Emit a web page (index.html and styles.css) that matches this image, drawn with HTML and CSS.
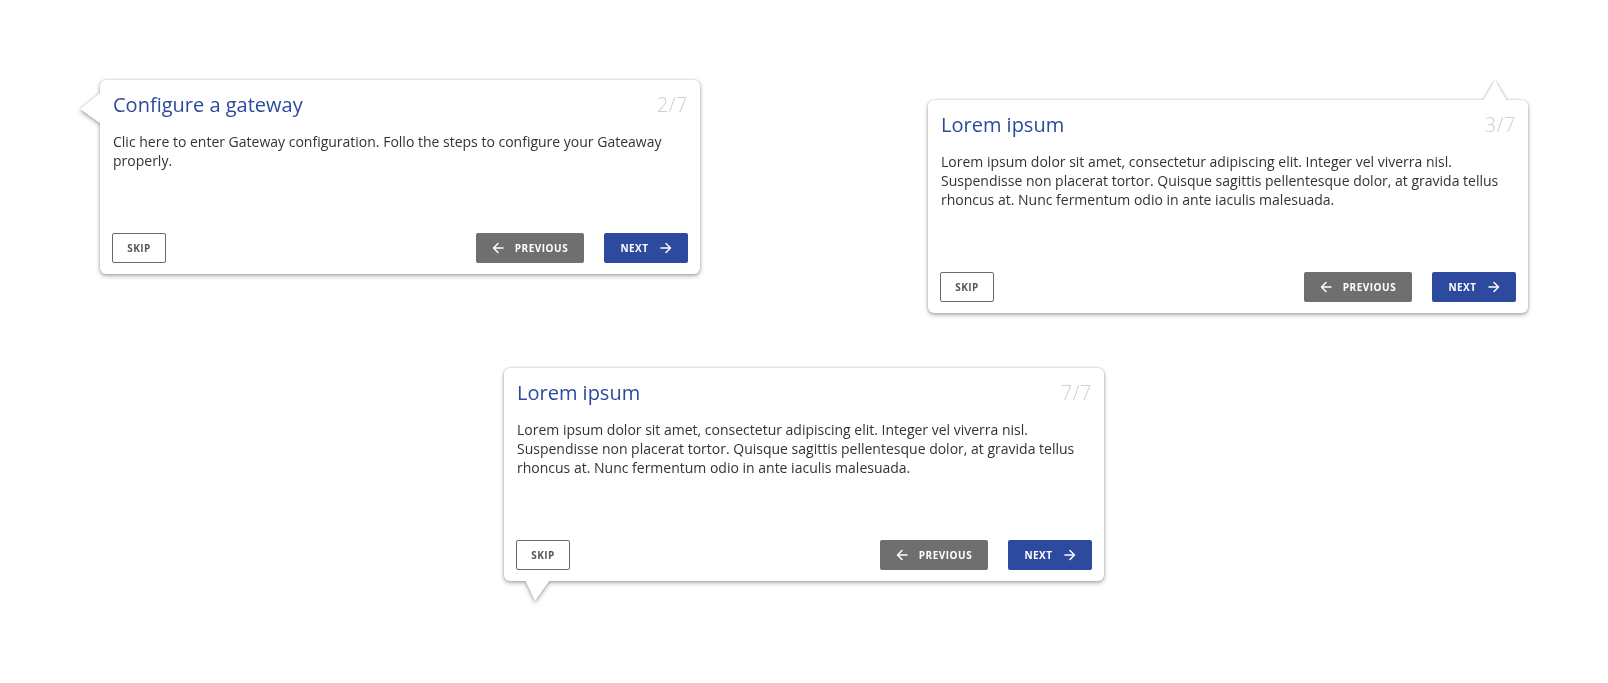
FILE: index.html
```html
<!DOCTYPE html>
<html lang="en">
<head>
<meta charset="utf-8">
<title>Tour tooltips</title>
<link rel="stylesheet" href="styles.css">
</head>
<body>
<main class="canvas">
  <div class="row row-top">
    <div class="tip tip-left">
      <span class="pointer pointer-left"></span>
      <section class="card">
        <header class="card-head">
          <h2 class="card-title">Configure a gateway</h2>
          <span class="card-count">2/7</span>
        </header>
        <p class="card-text">Clic here to enter Gateway configuration. Follo the steps to configure your Gateaway properly.</p>
        <footer class="card-foot">
          <button class="btn btn-skip">SKIP</button>
          <div class="nav">
            <button class="btn btn-prev"><svg class="ico" viewBox="0 0 12 12"><path d="M11 6H1.5M6 1.5L1.5 6L6 10.5"/></svg>PREVIOUS</button>
            <button class="btn btn-next">NEXT<svg class="ico" viewBox="0 0 12 12"><path d="M1 6H10.5M6 1.5L10.5 6L6 10.5"/></svg></button>
          </div>
        </footer>
      </section>
    </div>

    <div class="tip tip-top">
      <span class="pointer pointer-top"></span>
      <section class="card">
        <header class="card-head">
          <h2 class="card-title">Lorem ipsum</h2>
          <span class="card-count">3/7</span>
        </header>
        <p class="card-text">Lorem ipsum dolor sit amet, consectetur adipiscing elit. Integer vel viverra nisl. Suspendisse non placerat tortor. Quisque sagittis pellentesque dolor, at gravida tellus rhoncus at. Nunc fermentum odio in ante iaculis malesuada.</p>
        <footer class="card-foot">
          <button class="btn btn-skip">SKIP</button>
          <div class="nav">
            <button class="btn btn-prev"><svg class="ico" viewBox="0 0 12 12"><path d="M11 6H1.5M6 1.5L1.5 6L6 10.5"/></svg>PREVIOUS</button>
            <button class="btn btn-next">NEXT<svg class="ico" viewBox="0 0 12 12"><path d="M1 6H10.5M6 1.5L10.5 6L6 10.5"/></svg></button>
          </div>
        </footer>
      </section>
    </div>
  </div>

  <div class="row row-bottom">
    <div class="tip tip-bottom">
      <span class="pointer pointer-bottom"></span>
      <section class="card">
        <header class="card-head">
          <h2 class="card-title">Lorem ipsum</h2>
          <span class="card-count">7/7</span>
        </header>
        <p class="card-text">Lorem ipsum dolor sit amet, consectetur adipiscing elit. Integer vel viverra nisl. Suspendisse non placerat tortor. Quisque sagittis pellentesque dolor, at gravida tellus rhoncus at. Nunc fermentum odio in ante iaculis malesuada.</p>
        <footer class="card-foot">
          <button class="btn btn-skip">SKIP</button>
          <div class="nav">
            <button class="btn btn-prev"><svg class="ico" viewBox="0 0 12 12"><path d="M11 6H1.5M6 1.5L1.5 6L6 10.5"/></svg>PREVIOUS</button>
            <button class="btn btn-next">NEXT<svg class="ico" viewBox="0 0 12 12"><path d="M1 6H10.5M6 1.5L10.5 6L6 10.5"/></svg></button>
          </div>
        </footer>
      </section>
    </div>
  </div>
</main>
</body>
</html>
```

FILE: styles.css
```css
* { box-sizing: border-box; }

html, body {
  margin: 0;
  background: #ffffff;
  font-family: "Open Sans", "Noto Sans", sans-serif;
  color: #333333;
}

.canvas {
  width: 1608px;
  min-height: 683px;
  padding-top: 80px;
  padding-bottom: 40px;
}

.row {
  display: flex;
  align-items: flex-start;
}

.row-top {
  justify-content: space-between;
  padding: 0 80px 0 100px;
}

.row-bottom {
  justify-content: center;
  margin-top: 55px;
}

.tip {
  position: relative;
  width: 600px;
  filter: drop-shadow(0 0 1px rgba(0, 0, 0, 0.22)) drop-shadow(0 2px 2px rgba(0, 0, 0, 0.3));
}

.tip-top { margin-top: 20px; }

.card {
  position: relative;
  background: #ffffff;
  border-radius: 6px;
  padding: 11px 12px 11px 12px;
}

.pointer {
  position: absolute;
  display: block;
  background: #ffffff;
  z-index: 1;
}

.pointer-left {
  left: -20px;
  top: 12px;
  width: 21px;
  height: 32px;
  clip-path: polygon(100% 0, 0 53%, 100% 100%);
}

.pointer-top {
  left: 555px;
  top: -20px;
  width: 24px;
  height: 21px;
  clip-path: polygon(0 100%, 50% 0, 100% 100%);
}

.pointer-bottom {
  left: 21px;
  top: calc(100% - 1px);
  width: 25px;
  height: 21px;
  clip-path: polygon(0 0, 100% 0, 40% 100%);
}

.card-head {
  display: flex;
  justify-content: space-between;
  align-items: baseline;
  padding-left: 1px;
}

.card-title {
  margin: 0;
  font-size: 20px;
  line-height: 28px;
  font-weight: 400;
  color: #2c4a9e;
}

.card-count {
  font-size: 20px;
  line-height: 28px;
  font-weight: 300;
  color: #cfcfcf;
  letter-spacing: 0.5px;
}

.card-text {
  margin: 13px 0 0 0;
  padding-left: 1px;
  font-size: 14px;
  line-height: 19px;
  color: #333333;
}

.card-foot {
  display: flex;
  justify-content: space-between;
  align-items: center;
  margin-top: 63px;
}

.nav {
  display: flex;
  gap: 20px;
}

.btn {
  display: flex;
  align-items: center;
  justify-content: center;
  height: 30px;
  border-radius: 2px;
  font-family: "Open Sans", "Noto Sans", sans-serif;
  font-size: 10px;
  font-weight: 700;
  letter-spacing: 0.5px;
  padding: 0;
  cursor: pointer;
}

.btn-skip {
  width: 54px;
  background: #ffffff;
  border: 1px solid #6a6a6a;
  color: #555555;
}

.btn-prev {
  width: 108px;
  gap: 11px;
  border: none;
  background: #6e6f6e;
  color: #ffffff;
}

.btn-next {
  width: 84px;
  gap: 11px;
  border: none;
  background: #2e4a9e;
  color: #ffffff;
}

.ico {
  width: 12px;
  height: 12px;
  fill: none;
  stroke: #ffffff;
  stroke-width: 1.5;
  stroke-linecap: round;
  stroke-linejoin: round;
}
```
